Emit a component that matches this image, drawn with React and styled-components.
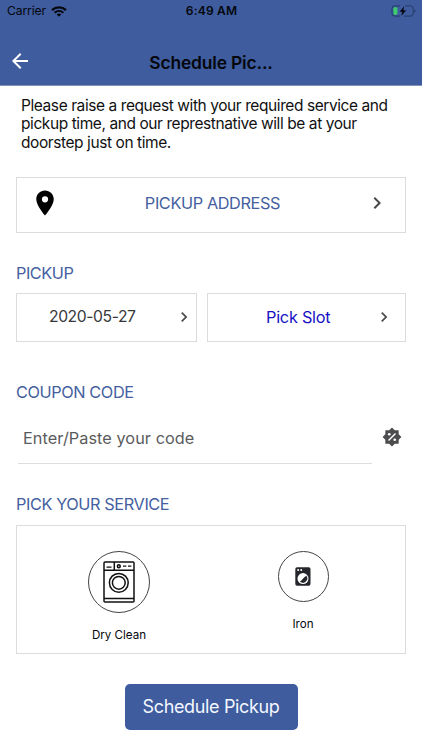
import React from "react";
import styled, { createGlobalStyle } from "styled-components";
import { MdArrowBack, MdChevronRight, MdLocationOn } from "react-icons/md";

const GlobalStyle = createGlobalStyle`
  * {
    box-sizing: border-box;
  }
  body {
    margin: 0;
    background: #fff;
    font-family: Inter, "Liberation Sans", sans-serif;
  }
  svg {
    display: block;
    flex-shrink: 0;
  }
`;

const WifiIcon = () => (
  <svg width="16" height="11" viewBox="0 0 16 11" fill="none" stroke="#05070d">
    <path d="M1 4.1C5 .4 11 .4 15 4.1" strokeWidth="2.3" />
    <path d="M3.6 6.7c2.6-2.3 6.2-2.3 8.8 0" strokeWidth="2" />
    <path d="M8 10.7 5.7 8.4c1.3-1.1 3.3-1.1 4.6 0z" fill="#05070d" stroke="none" />
  </svg>
);

const BatteryIcon = () => (
  <svg width="25" height="12" viewBox="0 0 25 12">
    <path d="M9 .9H3.6Q1 .9 1 3.4v5.2q0 2.5 2.6 2.5H9M14 .9h5.6q2.6 0 2.6 2.5v5.2q0 2.5-2.6 2.5H13" fill="none" stroke="#263a66" />
    <path d="M23.4 4.2q1.1.5 1.1 1.8t-1.1 1.8z" fill="#263a66" />
    <rect x="2.4" y="2.3" width="4" height="7.4" rx="1.2" fill="#3dcb6c" />
    <path d="M13.2 1.2 8.6 6.7h2.7l-1 4.2 4.8-5.6h-2.8z" fill="#05070d" />
  </svg>
);

const CouponIcon = () => (
  <svg width="20" height="20" viewBox="0 0 24 24">
    <path d="M20 8.69V4h-4.69L12 .69 8.69 4H4v4.69L.69 12 4 15.31V20h4.69L12 23.31 15.31 20H20v-4.69L23.31 12z" fill="#4c4c4e" />
    <path d="m7.8 16.2 8.4-8.4" stroke="#fff" strokeWidth="1.8" />
    <circle cx="8.7" cy="8.7" r="1.6" fill="#fff" />
    <circle cx="15.3" cy="15.3" r="1.6" fill="#fff" />
  </svg>
);

const WasherIcon = () => (
  <svg width="32" height="42" viewBox="0 0 32 42" fill="none" stroke="#111" strokeWidth="1.5">
    <rect x="1" y="1" width="30" height="40" rx="1" />
    <path d="M1 9.3h30M11.3 1v8.3M1 37.5h30" />
    <path d="M3.5 6.2h5M20 5.2h3.3M25 5.2h3.3" strokeWidth="1.3" />
    <circle cx="15.8" cy="5.2" r="1.4" strokeWidth="1.6" />
    <circle cx="15.8" cy="21.8" r="9.4" />
    <circle cx="15.8" cy="21.8" r="6.4" />
  </svg>
);

const DryerIcon = () => (
  <svg width="16" height="19" viewBox="0 0 16 19">
    <rect x=".3" y=".3" width="15.2" height="18.5" rx="1.8" fill="#25262b" />
    <circle cx="3.1" cy="3.1" r="1" fill="#fff" />
    <circle cx="6.2" cy="3.1" r="1" fill="#fff" />
    <circle cx="8" cy="11.6" r="5.5" fill="#fff" />
    <path d="M11.5 9.2a4.2 4.2 0 0 1-6.2 5.4C7.4 13.8 8.7 10 11.5 9.2z" fill="#25262b" stroke="#25262b" strokeWidth=".7" />
  </svg>
);

const App = () => {
  return (
    <Screen>
      <GlobalStyle />
      <Header>
        <StatusBar>
          <Carrier>
            <Text $size={12.2} $track={-0.15}>Carrier</Text>
            <WifiIcon />
          </Carrier>
          <Text $size={12} $weight={600} $track={0.2}>6:49 AM</Text>
          <BatterySlot>
            <BatteryIcon />
          </BatterySlot>
        </StatusBar>
        <NavBar>
          <MdArrowBack size={24} color="#fff" />
          <Text $size={17.4} $weight={600} $track={-0.15}>Schedule Pic...</Text>
        </NavBar>
      </Header>

      <Content>
        <Intro>
          Please raise a request with your required service and
          <br />
          pickup time, and our represtnative will be at your
          <br />
          doorstep just on time.
        </Intro>

        <AddressBox>
          <MdLocationOn size={30} color="#000" />
          <Text $size={16.3} $color="#4460a0" $track={-0.38}>PICKUP ADDRESS</Text>
          <MdChevronRight size={24} color="#48484a" />
        </AddressBox>

        <Heading $track={-0.45}>PICKUP</Heading>
        <SlotRow>
          <SlotBox $left={32} $right={2}>
            <Text $size={15.7} $color="#38383a" $track={-0.42}>2020-05-27</Text>
            <MdChevronRight size={20} color="#48484a" />
          </SlotBox>
          <SlotBox $left={58} $right={11}>
            <Text $size={16.3} $color="#1510c4" $track={-0.25}>Pick Slot</Text>
            <MdChevronRight size={20} color="#48484a" />
          </SlotBox>
        </SlotRow>

        <CouponHeading $track={-0.4}>COUPON CODE</CouponHeading>
        <CouponRow>
          <CodeField>
            <Text $size={16.3} $color="#5b5b5d" $track={0.05}>Enter/Paste your code</Text>
          </CodeField>
          <CouponIcon />
        </CouponRow>

        <ServiceHeading $track={-0.4}>PICK YOUR SERVICE</ServiceHeading>
        <ServiceBox>
          <Service>
            <Circle $size={62}>
              <WasherIcon />
            </Circle>
            <Text $size={11.6}>Dry Clean</Text>
          </Service>
          <Service>
            <Circle $size={51}>
              <DryerIcon />
            </Circle>
            <Text $size={11.6}>Iron</Text>
          </Service>
        </ServiceBox>

        <Button>
          <Text $size={18} $color="#f4f7ff" $track={-0.35}>Schedule Pickup</Text>
        </Button>
      </Content>
    </Screen>
  );
};

export default App;

const Screen = styled.div`
  width: 422px;
  height: 750px;
  overflow: hidden;
  background: #fff;
`;

const Text = styled.span`
  color: ${(p) => p.$color || "#05070d"};
  font-size: ${(p) => p.$size}px;
  font-weight: ${(p) => p.$weight || 400};
  letter-spacing: ${(p) => p.$track || 0}px;
  line-height: 20px;
  white-space: nowrap;
`;

const Header = styled.header`
  height: 86px;
  background: #3e5c9e;
  border-bottom: 1px solid #8393b8;
`;

const StatusBar = styled.div`
  display: grid;
  grid-template-columns: 1fr auto 1fr;
  align-items: center;
  height: 22px;
  padding: 0 6px 0 7px;
`;

const Carrier = styled.div`
  display: flex;
  align-items: center;
  gap: 5px;
`;

const BatterySlot = styled.div`
  display: flex;
  justify-content: flex-end;
`;

const NavBar = styled.div`
  display: grid;
  grid-template-columns: 24px 1fr 24px;
  align-items: center;
  justify-items: center;
  height: 40px;
  margin-top: 19px;
  padding: 0 8px;

  ${Text} {
    padding-top: 4px;
  }
`;

const Content = styled.main`
  display: flex;
  flex-direction: column;
  padding: 11px 16px 0;
`;

const Intro = styled.p`
  margin: 0;
  padding-left: 5px;
  color: #111;
  font-size: 15.5px;
  letter-spacing: -0.42px;
  line-height: 18.3px;
  white-space: nowrap;
`;

const AddressBox = styled.div`
  display: flex;
  align-items: center;
  justify-content: space-between;
  height: 56px;
  margin-top: 25px;
  padding: 0 16px 3px 13px;
  border: 1px solid #dcdcdc;
`;

const Heading = styled.h2`
  margin: 30px 0 10px;
  color: #4460a0;
  font-size: 16.3px;
  font-weight: 400;
  letter-spacing: ${(p) => p.$track}px;
  line-height: 20px;
  white-space: nowrap;
`;

const CouponHeading = styled(Heading)`
  margin: 40px 0 11px;
`;

const ServiceHeading = styled(Heading)`
  margin: 30px 0 11px;
`;

const SlotRow = styled.div`
  display: grid;
  grid-template-columns: 181px 199px;
  gap: 10px;
`;

const SlotBox = styled.div`
  display: flex;
  align-items: center;
  justify-content: space-between;
  height: 49px;
  padding: 0 ${(p) => p.$right}px 0 ${(p) => p.$left}px;
  border: 1px solid #dcdcdc;

  > svg {
    margin-bottom: 1px;
  }
`;

const CouponRow = styled.div`
  display: flex;
  align-items: center;
  justify-content: space-between;
  height: 51px;
  padding: 0 4px 0 2px;

  > svg {
    margin-bottom: 2px;
  }
`;

const CodeField = styled.div`
  display: flex;
  align-items: center;
  width: 354px;
  height: 51px;
  padding-left: 5px;
  border-bottom: 1px solid #dedede;
`;

const ServiceBox = styled.div`
  display: grid;
  grid-template-columns: 204px 164px;
  height: 129px;
  padding-top: 25px;
  border: 1px solid #dcdcdc;
`;

const Service = styled.div`
  display: flex;
  flex-direction: column;
  align-items: center;
  gap: 12px;
`;

const Circle = styled.div`
  display: flex;
  align-items: center;
  justify-content: center;
  width: ${(p) => p.$size}px;
  height: ${(p) => p.$size}px;
  border: 1px solid #444;
  border-radius: 50%;
`;

const Button = styled.button`
  align-self: center;
  width: 173px;
  height: 46px;
  margin-top: 30px;
  padding: 0;
  border: 0;
  border-radius: 5px;
  background: #3e5c9e;
  font-family: inherit;
`;
